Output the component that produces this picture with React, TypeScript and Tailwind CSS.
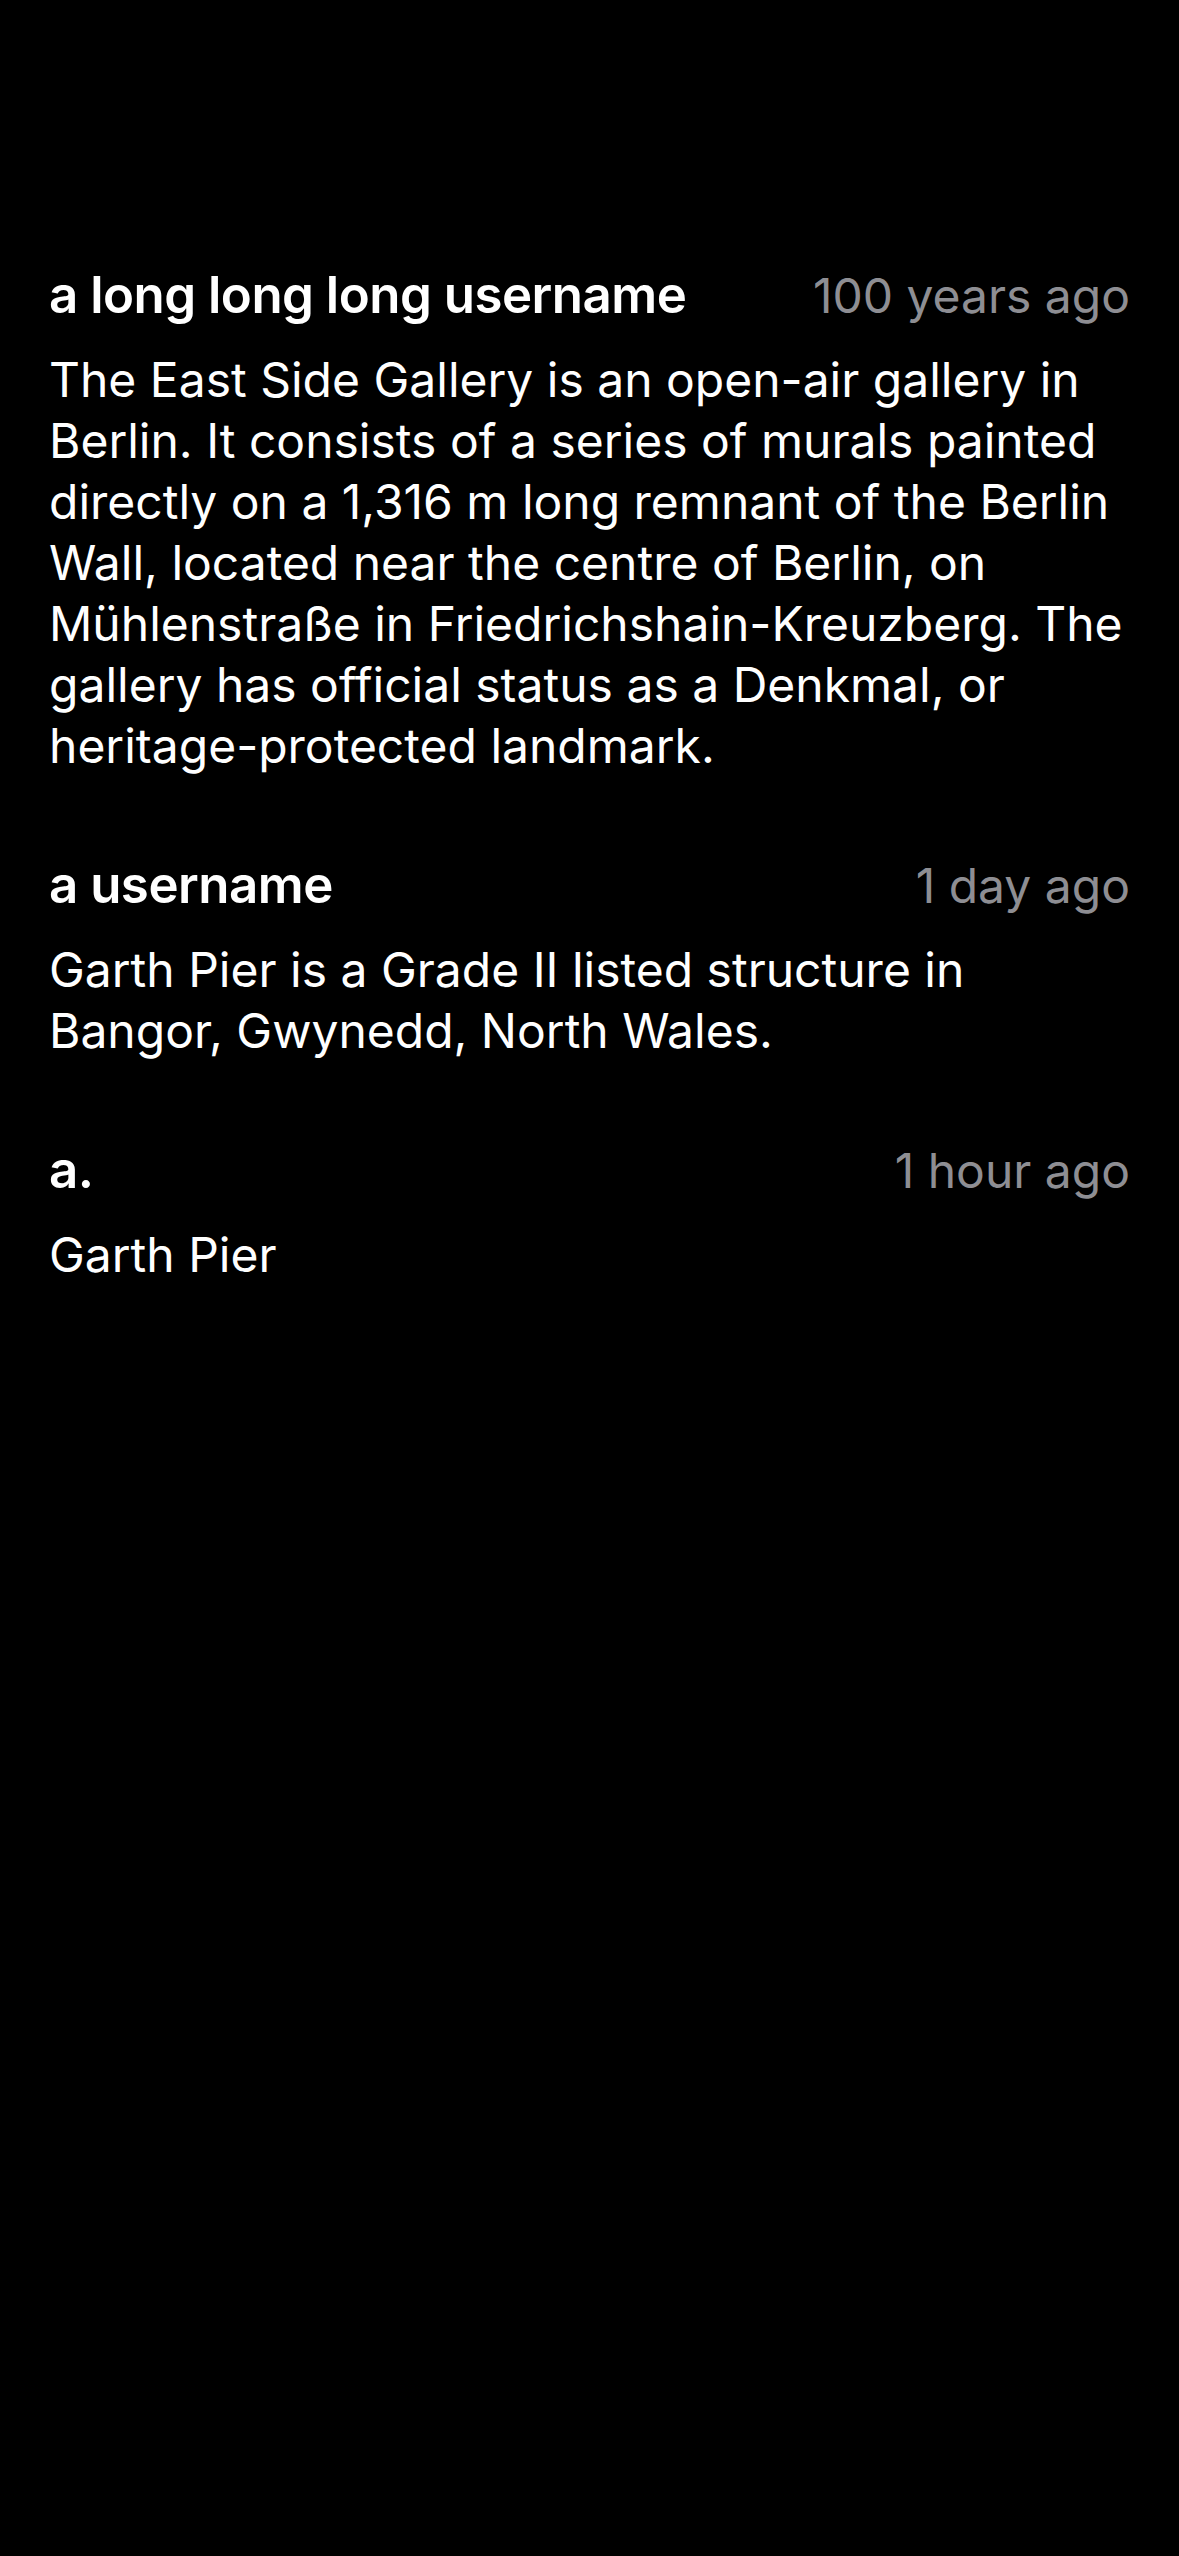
import React from "react";

type Comment = { user: string; time: string; body: string };

const comments: Comment[] = [
  {
    user: "a long long long username",
    time: "100 years ago",
    body:
      "The East Side Gallery is an open-air gallery in Berlin. It consists of a series of murals painted directly on a 1,316 m long remnant of the Berlin Wall, located near the centre of Berlin, on Mühlenstraße in Friedrichshain-Kreuzberg. The gallery has official status as a Denkmal, or heritage-protected landmark.",
  },
  {
    user: "a username",
    time: "1 day ago",
    body: "Garth Pier is a Grade II listed structure in Bangor, Gwynedd, North Wales.",
  },
  { user: "a.", time: "1 hour ago", body: "Garth Pier" },
];

export default function App() {
  return (
    <div
      className="min-h-[2556px] w-[1179px] bg-black px-[49px] pt-[264px] text-white"
      style={{ fontFamily: "Inter, 'Noto Sans', sans-serif" }}
    >
      <div className="flex flex-col gap-[78px]">
        {comments.map((c) => (
          <div key={c.user} className="flex flex-col gap-[23px]">
            <div className="flex items-baseline justify-between gap-4 leading-[61px]">
              <span className="text-[51px] font-semibold tracking-[-0.5px]">{c.user}</span>
              <span className="text-[48px] text-[#8e8e93]">{c.time}</span>
            </div>
            <p className="text-[48px] leading-[61px]">{c.body}</p>
          </div>
        ))}
      </div>
    </div>
  );
}
